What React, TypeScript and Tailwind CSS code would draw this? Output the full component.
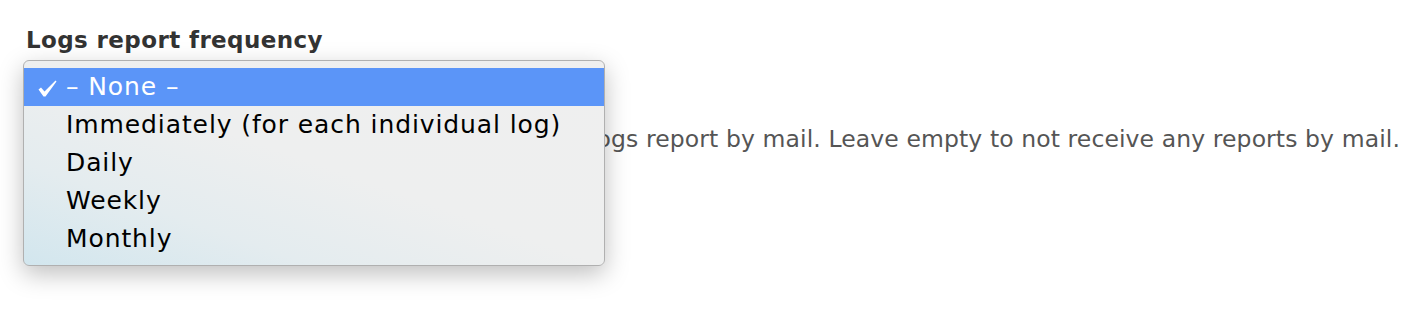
import React from "react";

const items = ["Immediately (for each individual log)", "Daily", "Weekly", "Monthly"];

export default function App() {
  return (
    <div className="relative h-[314px] w-[1422px] overflow-hidden bg-white font-['DejaVu_Sans',sans-serif]">
      <div className="pl-[26px] pt-[26px]">
        <label className="block text-[23px] font-bold leading-[28px] tracking-[0.4px] text-[#333]">
          Logs report frequency
        </label>
        <p className="ml-[9px] mt-[71px] whitespace-nowrap text-[23.5px] leading-[28px] tracking-[0.1px] text-[#555]">
          Select how frequently you want to receive the logs report by mail. Leave empty to not receive any reports by mail.
        </p>
      </div>

      <div className="absolute left-[23px] top-[60px] h-[206px] w-[582px] rounded-[6px] border border-[#b0b0b0] bg-[linear-gradient(to_top_right,#d2e6ee_0%,#e4ecef_25%,#eeefef_50%,#efefef_100%)] py-[7px] shadow-[0_8px_24px_rgba(0,0,0,0.25)]">
        <div className="relative flex h-[38px] items-center bg-[#5b95f8] pl-[42px] text-[25px] tracking-[0.9px] text-white">
          <svg className="absolute left-[14px] top-[12px]" width="19" height="17" viewBox="0 0 19 17">
            <path d="M0.5 9.5 L3 7.5 L6.5 11.5 L17.5 0.5 L18.5 1.5 L7.5 16.5 L5.5 16.5 Z" fill="white" />
          </svg>
          <span>– None –</span>
        </div>
        {items.map((t) => (
          <div key={t} className="flex h-[38px] items-center pl-[42px] text-[25px] tracking-[0.9px] text-black">
            {t}
          </div>
        ))}
      </div>
    </div>
  );
}
